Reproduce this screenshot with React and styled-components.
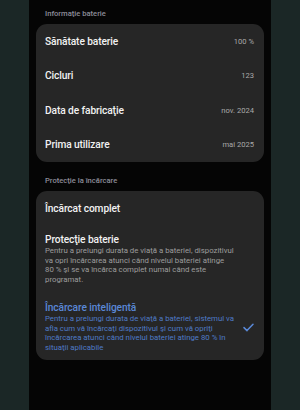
import styled, { createGlobalStyle } from "styled-components";

const Global = createGlobalStyle`
  html, body {
    margin: 0;
    padding: 0;
    background: #1b2726;
  }
  body {
    font-family: Roboto, "Noto Sans", sans-serif;
  }
`;

const Page = styled.div`
  width: 300px;
  height: 410px;
  display: flex;
  justify-content: center;
  background: #1b2726;
  overflow: hidden;
`;

const Phone = styled.div`
  width: 242px;
  height: 410px;
  background: #050505;
  padding: 0 7px;
  box-sizing: border-box;
  display: flex;
  flex-direction: column;
`;

const SectionTitle = styled.div`
  font-size: 7.6px;
  font-weight: 500;
  color: #8d8d99;
  padding: ${(p) => (p.$first ? "9px" : "14px")} 9px 6px;
  line-height: 9px;
`;

const Card = styled.div`
  background: #262626;
  border-radius: 11px;
  display: flex;
  flex-direction: column;
  padding: ${(p) => p.$pad || "0"};
`;

const Row = styled.div`
  height: 34.5px;
  display: flex;
  align-items: center;
  justify-content: space-between;
  padding: 0 10px 0 9px;
`;

const Label = styled.div`
  font-size: 10.2px;
  font-weight: 500;
  letter-spacing: -0.1px;
  color: ${(p) => (p.$active ? "#5a88d6" : "#f2f2f2")};
`;

const Value = styled.div`
  font-size: 7.6px;
  color: #a9a9a9;
`;

const Option = styled.div`
  display: flex;
  align-items: center;
  gap: 4px;
  padding: ${(p) => p.$pad};
  min-height: ${(p) => p.$h || "auto"};
`;

const OptionText = styled.div`
  flex: 1;
  display: flex;
  flex-direction: column;
  gap: 1px;
`;

const Desc = styled.div`
  font-size: 7.8px;
  line-height: 9.5px;
  white-space: nowrap;
  color: ${(p) => (p.$active ? "#4f7bc7" : "#9d9d9d")};
`;

const Check = () => (
  <svg width="11" height="9" viewBox="0 0 11 9">
    <path
      d="M1 4.6 L4 7.6 L10 1.2"
      fill="none"
      stroke="#5a88d6"
      strokeWidth="1.5"
      strokeLinecap="round"
      strokeLinejoin="round"
    />
  </svg>
);

const info = [
  ["Sănătate baterie", "100 %"],
  ["Cicluri", "123"],
  ["Data de fabricaţie", "nov. 2024"],
  ["Prima utilizare", "mai 2025"],
];

export default function App() {
  return (
    <Page>
      <Global />
      <Phone>
        <SectionTitle $first>Informaţie baterie</SectionTitle>
        <Card>
          {info.map(([k, v]) => (
            <Row key={k}>
              <Label>{k}</Label>
              <Value>{v}</Value>
            </Row>
          ))}
        </Card>
        <SectionTitle>Protecţie la încărcare</SectionTitle>
        <Card $pad="0 0 8px">
          <Option $pad="0 10px 0 9px" $h="35px">
            <Label>Încărcat complet</Label>
          </Option>
          <Option $pad="8px 10px 10px 9px">
            <OptionText>
              <Label>Protecţie baterie</Label>
              <Desc>
                Pentru a prelungi durata de viaţă a bateriei, dispozitivul
                <br />
                va opri încărcarea atunci când nivelul bateriei atinge
                <br />
                80 % şi se va încărca complet numai când este
                <br />
                programat.
              </Desc>
            </OptionText>
          </Option>
          <Option $pad="8px 10px 0 9px">
            <OptionText>
              <Label $active>Încărcare inteligentă</Label>
              <Desc $active>
                Pentru a prelungi durata de viaţă a bateriei, sistemul va
                <br />
                afla cum vă încărcaţi dispozitivul şi cum vă opriţi
                <br />
                încărcarea atunci când nivelul bateriei atinge 80 % în
                <br />
                situaţii aplicabile
              </Desc>
            </OptionText>
            <Check />
          </Option>
        </Card>
      </Phone>
    </Page>
  );
}
